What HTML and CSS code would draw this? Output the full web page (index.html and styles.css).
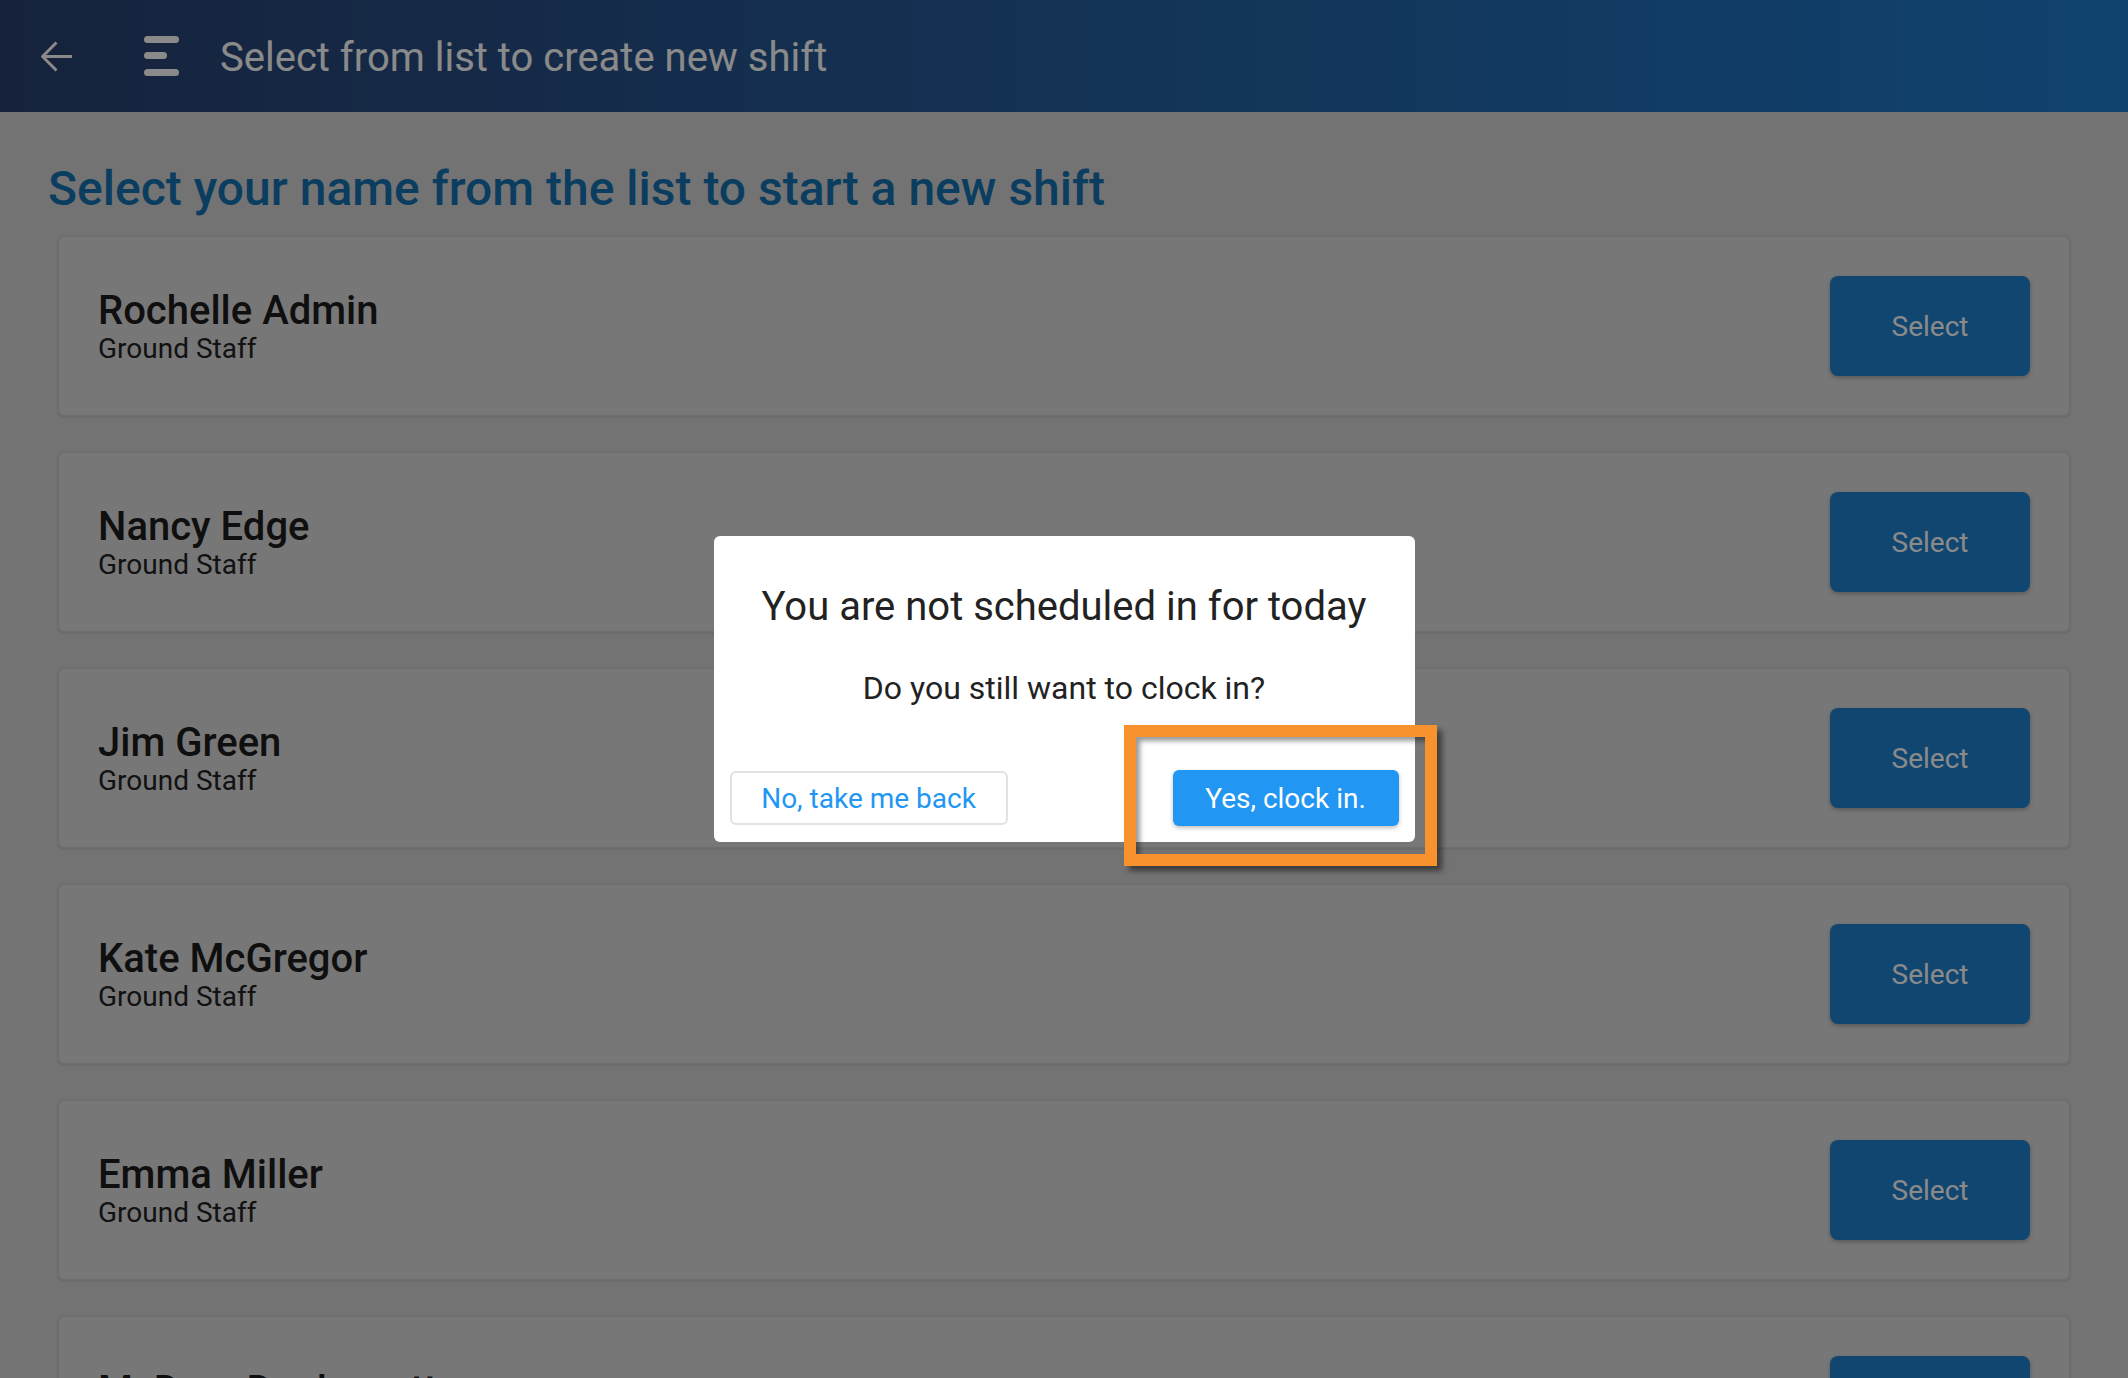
FILE: index.html
```html
<!DOCTYPE html>
<html>
<head>
<meta charset="UTF-8">
<title>Select from list to create new shift</title>
<link rel="stylesheet" href="styles.css">
</head>
<body>

<header class="topbar">
  <a class="back" href="#">
    <svg width="31" height="31" viewBox="0 0 31 31"><path d="M31 15.5H1.5M15.5 1.5L1.5 15.5L15.5 29.5" fill="none" stroke="#fff" stroke-width="3"/></svg>
  </a>
  <a class="menu" href="#">
    <svg width="35" height="40" viewBox="0 0 35 40"><rect x="0" y="0" width="35" height="7" rx="3.5" fill="#fff"/><rect x="0" y="16" width="23" height="7" rx="3.5" fill="#fff"/><rect x="0" y="33" width="35" height="7" rx="3.5" fill="#fff"/></svg>
  </a>
  <h1 class="topbar-title">Select from list to create new shift</h1>
</header>

<main class="page">
  <h2 class="page-title">Select your name from the list to start a new shift</h2>
  <ul class="staff-list">
    <li class="staff-card">
      <div class="staff-info"><div class="staff-name">Rochelle Admin</div><div class="staff-role">Ground Staff</div></div>
      <button class="btn-select">Select</button>
    </li>
    <li class="staff-card">
      <div class="staff-info"><div class="staff-name">Nancy Edge</div><div class="staff-role">Ground Staff</div></div>
      <button class="btn-select">Select</button>
    </li>
    <li class="staff-card">
      <div class="staff-info"><div class="staff-name">Jim Green</div><div class="staff-role">Ground Staff</div></div>
      <button class="btn-select">Select</button>
    </li>
    <li class="staff-card">
      <div class="staff-info"><div class="staff-name">Kate McGregor</div><div class="staff-role">Ground Staff</div></div>
      <button class="btn-select">Select</button>
    </li>
    <li class="staff-card">
      <div class="staff-info"><div class="staff-name">Emma Miller</div><div class="staff-role">Ground Staff</div></div>
      <button class="btn-select">Select</button>
    </li>
    <li class="staff-card">
      <div class="staff-info"><div class="staff-name">McDara Dunbarrett</div><div class="staff-role">Ground Staff</div></div>
      <button class="btn-select">Select</button>
    </li>
  </ul>
</main>

<!-- modal -->
<div class="backdrop">
  <div class="dialog">
    <h3 class="dialog-title">You are not scheduled in for today</h3>
    <p class="dialog-text">Do you still want to clock in?</p>
    <div class="dialog-actions">
      <button class="btn-outline">No, take me back</button>
      <button class="btn-primary">Yes, clock in.</button>
    </div>
    <div class="highlight"></div>
  </div>
</div>

</body>
</html>
```
FILE: styles.css
```css
html, body {
  margin: 0;
  overflow: hidden;
}
body {
  font-family: Roboto, "Liberation Sans", sans-serif;
  background: #d5d5d5;
  color: #1f1f1f;
}

/* top bar */
.topbar {
  height: 112px;
  display: flex;
  align-items: center;
  padding-left: 41px;
  background: linear-gradient(to right, #2a406f, #1f7ccd);
}
.topbar a {
  display: flex;
}
.back {
  margin-right: 72px;
}
.menu {
  margin-right: 41px;
}
.topbar-title {
  margin: 0;
  padding-top: 2px;
  font-size: 40px;
  font-weight: 400;
  color: #fff;
}

/* list */
.page {
  padding: 52px 48px 0;
}
.page-title {
  margin: 0 0 22px;
  font-size: 48px;
  font-weight: 500;
  color: #1471b0;
  line-height: 50px;
}
.staff-list {
  list-style: none;
  margin: 0;
  padding: 0 10px;
  display: flex;
  flex-direction: column;
  gap: 36px;
}
.staff-card {
  height: 180px;
  box-sizing: border-box;
  display: flex;
  align-items: center;
  justify-content: space-between;
  padding: 0 39px 0 39px;
  background: #dcdcdc;
  border: 1px solid #cbcbcb;
  border-radius: 6px;
  box-shadow: 0 1px 3px rgba(0,0,0,0.12);
}
.staff-name {
  font-size: 40px;
  font-weight: 500;
  line-height: 46px;
  color: #1c1c1c;
}
.staff-role {
  font-size: 28px;
  line-height: 30px;
  color: #222;
}
.btn-select {
  width: 200px;
  height: 100px;
  border: 0;
  border-radius: 8px;
  background: #1e82ce;
  color: #fff;
  font-family: inherit;
  font-size: 28px;
  box-shadow: 0 2px 4px rgba(0,0,0,0.25);
}

/* modal */
.backdrop {
  position: fixed;
  inset: 0;
  background: rgba(0,0,0,0.46);
  display: flex;
  align-items: center;
  justify-content: center;
}
.dialog {
  position: relative;
  width: 701px;
  box-sizing: border-box;
  padding: 47px 16px 16px;
  background: #fff;
  border-radius: 6px;
  text-align: center;
}
.dialog-title {
  margin: 0;
  font-size: 40px;
  font-weight: 400;
  color: #222;
}
.dialog-text {
  margin: 39px 0 0;
  font-size: 32px;
  color: #222;
}
.dialog-actions {
  display: flex;
  justify-content: space-between;
  align-items: center;
  margin-top: 63px;
}
.btn-outline {
  width: 278px;
  height: 54px;
  background: #fff;
  border: 2px solid #e2e2e2;
  border-radius: 6px;
  color: #2196f3;
  font-family: inherit;
  font-size: 28px;
}
.btn-primary {
  width: 226px;
  height: 56px;
  background: #2196f3;
  border: 0;
  border-radius: 6px;
  color: #fff;
  font-family: inherit;
  font-size: 28px;
  box-shadow: 0 2px 4px rgba(0,0,0,0.25);
}
.highlight {
  position: absolute;
  left: 410px;
  top: 189px;
  width: 313px;
  height: 141px;
  box-sizing: border-box;
  border: 12px solid #f7922f;
  box-shadow: 5px 5px 6px rgba(0,0,0,0.5), inset 4px 4px 5px rgba(0,0,0,0.4);
}
```
